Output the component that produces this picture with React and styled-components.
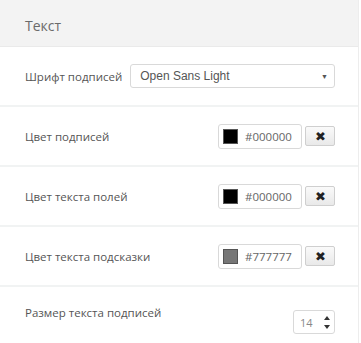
import React from 'react';
import styled, {createGlobalStyle} from 'styled-components';

const Global = createGlobalStyle`
    body {
        margin: 0;
        background: #fff;
        font-family: "Open Sans", "Liberation Sans", sans-serif;
    }
`;

const Panel = styled.div`
    width: 359px;
    border-right: 1px solid #ededed;
    min-height: 343px;
    box-sizing: border-box;
`;

const Header = styled.div`
    height: 47px;
    background: #f3f3f3;
    border-bottom: 1px solid #eaeaea;
    display: flex;
    align-items: center;
    padding: 4px 25px 0;
    font-size: 14px;
    color: #6a6a6a;
    box-sizing: border-box;
`;

const Row = styled.div`
    height: 60px;
    display: flex;
    align-items: ${props => props.last ? 'flex-start' : 'center'};
    justify-content: ${props => props.tight ? 'flex-start' : 'space-between'};
    gap: 8px;
    padding: ${props => props.last ? '18px 23px 0 25px' : '0 23px 0 25px'};
    border-bottom: ${props => props.last ? 'none' : '2px solid #f1f3f3'};
    box-sizing: border-box;
`;

const Label = styled.span`
    font-size: 11.5px;
    color: #555;
    white-space: nowrap;
`;

const Select = styled.div`
    flex: 1;
    height: 24px;
    border: 1px solid #d9d9d9;
    border-radius: 3px;
    display: flex;
    align-items: center;
    justify-content: space-between;
    padding: 0 6px 0 9px;
    font-family: "Liberation Sans", Arial, sans-serif;
    font-size: 12px;
    color: #555;
    box-sizing: border-box;
`;

const Caret = styled.span`
    font-size: 7px;
    color: #555;
`;

const Controls = styled.div`
    display: flex;
    align-items: center;
    gap: 3px;
`;

const ColorBox = styled.div`
    width: 84px;
    height: 25px;
    border: 1px solid #d9d9d9;
    border-radius: 3px;
    display: flex;
    align-items: center;
    gap: 7px;
    padding: 0 4px 0 4px;
    box-sizing: border-box;
    font-size: 11.5px;
    color: #666;
`;

const Swatch = styled.span`
    width: 15px;
    height: 15px;
    background: ${props => props.color};
    border: 1px solid #555;
    box-sizing: border-box;
`;

const ClearButton = styled.button`
    width: 30px;
    height: 20px;
    border: 1px solid #cfcfcf;
    border-radius: 2px;
    background: linear-gradient(#fafafa, #e9e9e9);
    display: flex;
    align-items: center;
    justify-content: center;
    padding: 0;
    color: #222;
    font-size: 13px;
    line-height: 1;
`;

const Spinner = styled.div`
    width: 42px;
    height: 24px;
    margin-top: 5px;
    border: 1px solid #d9d9d9;
    border-radius: 3px;
    display: flex;
    align-items: center;
    justify-content: space-between;
    padding: 0 4px 0 6px;
    box-sizing: border-box;
    font-size: 11px;
    color: #888;
`;

const Arrows = styled.span`
    display: flex;
    flex-direction: column;
    gap: 5px;
`;

const colors = [
    {label: 'Цвет подписей', value: '#000000'},
    {label: 'Цвет текста полей', value: '#000000'},
    {label: 'Цвет текста подсказки', value: '#777777'},
];

export default function App() {
    return (
        <Panel>
            <Global />
            <Header>Текст</Header>
            <Row tight>
                <Label>Шрифт подписей</Label>
                <Select>
                    Open Sans Light
                    <Caret>▼</Caret>
                </Select>
            </Row>
            {colors.map((c, i) => (
                <Row key={i}>
                    <Label>{c.label}</Label>
                    <Controls>
                        <ColorBox>
                            <Swatch color={c.value} />
                            {c.value}
                        </ColorBox>
                        <ClearButton>✖</ClearButton>
                    </Controls>
                </Row>
            ))}
            <Row last>
                <Label>Размер текста подписей</Label>
                <Spinner>
                    14
                    <Arrows>
                        <svg width="6" height="4" viewBox="0 0 6 4"><path d="M0 4L3 0L6 4Z" fill="#333" /></svg>
                        <svg width="6" height="4" viewBox="0 0 6 4"><path d="M0 0L3 4L6 0Z" fill="#333" /></svg>
                    </Arrows>
                </Spinner>
            </Row>
        </Panel>
    );
}
